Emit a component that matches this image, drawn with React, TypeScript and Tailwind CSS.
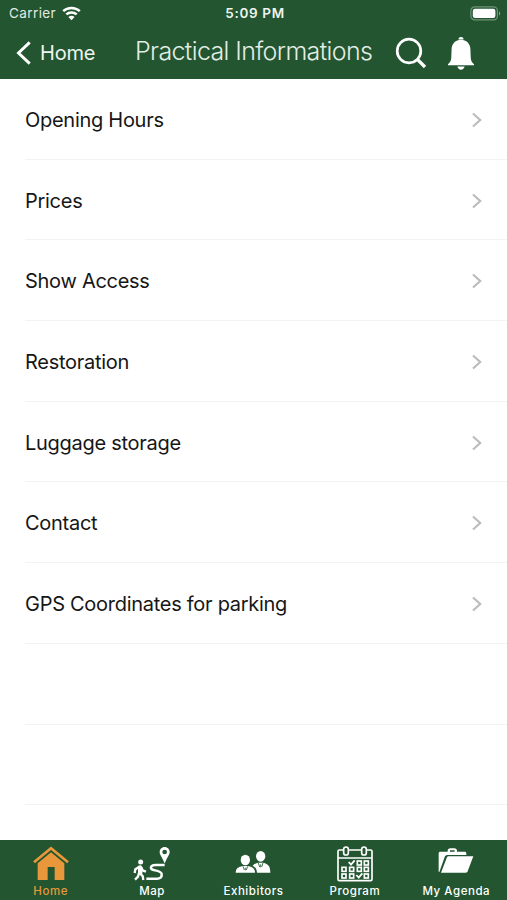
import type { ReactNode } from 'react'

const rows = [
  'Opening Hours',
  'Prices',
  'Show Access',
  'Restoration',
  'Luggage storage',
  'Contact',
  'GPS Coordinates for parking',
  '',
  '',
]

function StatusBar() {
  return (
    <div className="flex h-[27px] items-center pl-[9px] pr-[6px] text-white">
      <div className="flex flex-1 items-center gap-[6px]">
        <span className="text-[13.5px] tracking-[0.4px] text-[#e1ebe3]">Carrier</span>
        <svg width="19" height="15" viewBox="0 0 19 15" fill="none" stroke="currentColor" strokeWidth="2.5">
          <path d="M1.2 5.1C5.8.8 13.2.8 17.8 5.1" />
          <path d="M4.3 8.4c3-2.7 7.4-2.7 10.4 0" />
          <path d="M9.5 14.2l-3.1-3.3c1.8-1.5 4.4-1.5 6.2 0z" fill="currentColor" stroke="none" />
        </svg>
      </div>
      <span className="text-[13.5px] font-semibold tracking-[0.65px] text-[#eef4ef]">5:09 PM</span>
      <div className="flex flex-1 justify-end">
        <svg width="31" height="15" viewBox="0 0 31 15" fill="none">
          <rect x="0.9" y="0.9" width="26.5" height="13" rx="3.8" stroke="#6f9479" strokeWidth="1.2" />
          <rect x="2.8" y="2.8" width="22.6" height="9.2" rx="2.2" fill="#fff" />
          <path d="M29 5.2c1.7.8 1.7 3.6 0 4.4z" fill="#83a38b" />
        </svg>
      </div>
    </div>
  )
}

function NavBar() {
  return (
    <div className="flex h-[52px] items-center pl-[16px] text-white">
      <button className="flex w-[119px] items-center gap-[9px]">
        <svg width="15" height="26" viewBox="0 0 15 26" fill="none" stroke="currentColor" strokeWidth="2.9">
          <path d="M13.7 2.4L2.5 13l11.2 10.6" />
        </svg>
        <span className="text-[20px] leading-none tracking-[-0.2px] text-[#eef4ef]">Home</span>
      </button>
      <h1 className="w-[260px] whitespace-nowrap pb-[3px] text-[25px] font-light leading-none tracking-[-0.63px] text-[#e3ede5]">
        Practical Informations
      </h1>
      <button className="w-[52px]">
        <svg width="32" height="32" viewBox="0 0 32 32" fill="none" stroke="currentColor" strokeWidth="2.7">
          <circle cx="14" cy="14" r="11.8" />
          <path d="M22.5 22.5l7.500 7.500" strokeWidth="3.2" />
        </svg>
      </button>
      <button>
        <svg width="28" height="33" viewBox="0 0 28 33" fill="currentColor">
          <path d="M11.5 1.8a2.5 1.8 0 0 1 5 0v.8h-5z" />
          <path d="M14 2.7c-5.3 0-9.2 3.8-9.4 9.2l-.3 8.2c-.1 3.4-1 5.5-3.3 7.2v1h26v-1c-2.3-1.7-3.2-3.8-3.3-7.2l-.3-8.2C23.200 6.500 19.300 2.700 14 2.700z" />
          <path d="M10.400 29.600h7.200c-.4 2-1.800 3.200-3.600 3.200s-3.200-1.200-3.600-3.200z" />
        </svg>
      </button>
    </div>
  )
}

function HomeIcon() {
  return (
    <svg width="36" height="35" viewBox="0 0 108 105" fill="currentColor">
      <path d="M3 49L54 7l51 42" fill="none" stroke="currentColor" strokeWidth="8" />
      <path d="M14 52l40-33 40 33v50H65V63H44v39H14z" />
    </svg>
  )
}

function MapIcon() {
  return (
    <svg width="38" height="35" viewBox="0 0 114 105" fill="currentColor">
      <path fillRule="evenodd" d="M95 3c-9 0-15 7-15 15 0 10 8 15 14 33h2c6-18 14-23 14-33 0-8-6-15-15-15zm0 8a7 7 0 1 1 0 14 7 7 0 0 1 0-14z" />
      <path
        d="M95 57H67c-13 0-16 8-11 13 5 4 29 3 30 14 1 10-5 14-14 14H40"
        fill="none"
        stroke="currentColor"
        strokeWidth="7.500"
      />
      <circle cx="23" cy="48" r="7.500" />
      <path
        d="M20 62v20l9 8 2 12M18 80l-3 12-9 9M18 63L7 70l-2 11M23 63l7 11 9 3"
        fill="none"
        stroke="currentColor"
        strokeWidth="7"
        strokeLinejoin="round"
      />
      <path d="M15 59l9-1 5 7-1 20H15z" />
    </svg>
  )
}

function ExhibitorsIcon() {
  return (
    <svg width="36" height="35" viewBox="0 0 108 105" fill="currentColor">
      <ellipse cx="31" cy="42" rx="14" ry="16" />
      <path d="M2 80c0-13 8-17 21-20h16c13 3 21 7 21 20z" />
      <ellipse cx="77" cy="31" rx="14" ry="16" />
      <path d="M53 59c4-5 9-7 16-9h16c14 4 21 9 21 30H66c-1-12-5-16-13-21z" />
      {/* collars and ties */}
      <g fill="none" stroke="#225530" strokeWidth="2.500">
        <path d="M24 61l4 11M38 61l-4 11M31 65v8" />
        <path d="M70 51l4 12M84 51l-4 12M77 55v9" />
      </g>
    </svg>
  )
}

function ProgramIcon() {
  return (
    <svg width="36" height="36" viewBox="0 0 108 108" fill="none" stroke="currentColor" strokeWidth="5">
      <path d="M20 12H7c-2 0-4 2-4 4v84c0 2 2 4 4 4h94c2 0 4-2 4-4V16c0-2-2-4-4-4H88M34 12h40M3 36h102" />
      <rect x="20" y="3" width="14" height="24" rx="7" />
      <rect x="74" y="3" width="14" height="24" rx="7" />
      <rect x="61" y="45" width="12" height="12" />
      <rect x="82" y="45" width="12" height="12" />
      <rect x="15" y="64" width="12" height="12" />
      <rect x="38" y="64" width="12" height="12" />
      <rect x="61" y="64" width="12" height="12" />
      <rect x="82" y="64" width="12" height="12" />
      <rect x="15" y="84" width="12" height="12" />
      <rect x="38" y="84" width="12" height="12" />
      <rect x="82" y="84" width="12" height="12" />
      <path d="M35 48l7 8 11-13M58 87l7 8 11-13" strokeWidth="5.500" />
    </svg>
  )
}

function AgendaIcon() {
  return (
    <svg width="36" height="35" viewBox="0 0 108 105" fill="currentColor">
      <path d="M2 78V22c0-3 2-5 5-5h22v-2c0-5 3-8 8-8h12c5 0 8 3 8 8v2h23c3 0 5 2 5 5v5H30c-5 0-8 2-10 6L4 78zM36 17h14v-4H36z" />
      <path d="M26 36c1-3 3-5 6-5h74L89 76c-1 3-3 4-6 4H9z" />
    </svg>
  )
}

const tabs: { label: string; icon: ReactNode; active?: boolean }[] = [
  { label: 'Home', icon: <HomeIcon />, active: true },
  { label: 'Map', icon: <MapIcon /> },
  { label: 'Exhibitors', icon: <ExhibitorsIcon /> },
  { label: 'Program', icon: <ProgramIcon /> },
  { label: 'My Agenda', icon: <AgendaIcon /> },
]

export default function App() {
  return (
    <div className="flex h-screen flex-col overflow-hidden bg-white font-['Inter',sans-serif]">
      <header className="h-[79px] shrink-0 bg-[#225530]">
        <StatusBar />
        <NavBar />
      </header>

      <main className="flex-1">
        {rows.map((row, i) => (
          <div key={i} className="ml-[25px] flex h-[80.7px] items-center border-b border-[#f3f3f3] pr-[24px] pt-[2px]">
            <span className="flex-1 text-[20px] tracking-[-0.28px] text-[#161616]">{row}</span>
            {row && (
              <svg width="12" height="16" viewBox="0 0 12 16" fill="none" stroke="#bcbcbc" strokeWidth="2.2">
                <path d="M2 1.500L9.200 8 2 14.500" />
              </svg>
            )}
          </div>
        ))}
      </main>

      {/* Bottom tab bar */}
      <nav className="grid h-[60px] shrink-0 grid-cols-5 bg-[#225530]">
        {tabs.map((tab) => (
          <button
            key={tab.label}
            className={`flex flex-col items-center pt-[6px] ${tab.active ? 'text-[#e8983a]' : 'text-white'}`}
          >
            <span className="flex h-[37px] items-start">{tab.icon}</span>
            <span className="whitespace-nowrap text-[11.5px] font-medium leading-[16px] tracking-[0.55px]">{tab.label}</span>
          </button>
        ))}
      </nav>
    </div>
  )
}
